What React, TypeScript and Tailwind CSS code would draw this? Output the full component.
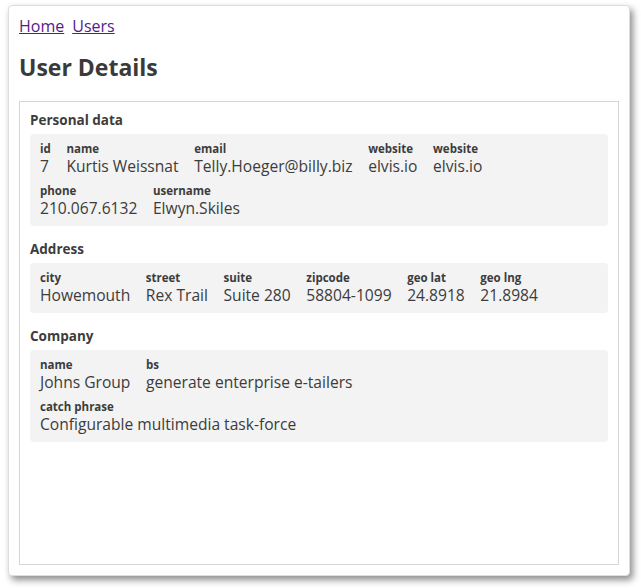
import React from 'react';

interface Field {
    label: string;
    value: string;
}

interface Section {
    title: string;
    rows: Field[][];
}

const SECTIONS: Section[] = [
    {
        title: 'Personal data',
        rows: [
            [
                { label: 'id', value: '7' },
                { label: 'name', value: 'Kurtis Weissnat' },
                { label: 'email', value: 'Telly.Hoeger@billy.biz' },
                { label: 'website', value: 'elvis.io' },
                { label: 'website', value: 'elvis.io' },
            ],
            [
                { label: 'phone', value: '210.067.6132' },
                { label: 'username', value: 'Elwyn.Skiles' },
            ],
        ],
    },
    {
        title: 'Address',
        rows: [
            [
                { label: 'city', value: 'Howemouth' },
                { label: 'street', value: 'Rex Trail' },
                { label: 'suite', value: 'Suite 280' },
                { label: 'zipcode', value: '58804-1099' },
                { label: 'geo lat', value: '24.8918' },
                { label: 'geo lng', value: '21.8984' },
            ],
        ],
    },
    {
        title: 'Company',
        rows: [
            [
                { label: 'name', value: 'Johns Group' },
                { label: 'bs', value: 'generate enterprise e-tailers' },
            ],
            [{ label: 'catch phrase', value: 'Configurable multimedia task-force' }],
        ],
    },
];

const FieldItem: React.FC<{ field: Field }> = ({ field }) => (
    <div className="flex flex-col">
        <span className="text-[11.5px] leading-[14px] font-bold">{field.label}</span>
        <span className="text-[15.6px] leading-[20px]">{field.value}</span>
    </div>
);

const DataSection: React.FC<{ section: Section }> = ({ section }) => (
    <div className="mb-[15px]">
        <h3 className="text-[13.5px] leading-[17px] font-bold mb-[5px]">{section.title}</h3>
        <div className="bg-[#f3f3f3] rounded-[4px] px-[10px] pt-[8px] pb-[8px] flex flex-col gap-[8px]">
            {section.rows.map((row, i) => (
                <div key={i} className="flex gap-x-[15.6px]">
                    {row.map((field, j) => (
                        <FieldItem key={j} field={field} />
                    ))}
                </div>
            ))}
        </div>
    </div>
);

export default function App() {
    return (
        <div
            className="w-[641px] h-[588px] bg-white pl-[8px] pt-[5px] text-[#3c3c3c]"
            style={{ fontFamily: '"Open Sans", "Liberation Sans", sans-serif' }}
        >
            <div className="w-[622px] h-[571px] bg-white border border-[#dedede] rounded-[4px] shadow-[3px_4px_7px_rgba(0,0,0,0.45)] p-[10px] flex flex-col">
                {/* Breadcrumbs */}
                <div className="flex gap-[8px] text-[16px] leading-[20px]">
                    <a href="#" className="text-[#551a8b] underline">Home</a>
                    <a href="#" className="text-[#551a8b] underline">Users</a>
                </div>

                <h1 className="text-[23px] leading-[32px] font-bold text-[#3a3a3a] mt-[15px] mb-[18px]">User Details</h1>

                <div className="flex-1 border border-[#d6d6d6] px-[10px] pt-[10px] pb-[10px]">
                    {SECTIONS.map((section) => (
                        <DataSection key={section.title} section={section} />
                    ))}
                </div>
            </div>
        </div>
    );
}
